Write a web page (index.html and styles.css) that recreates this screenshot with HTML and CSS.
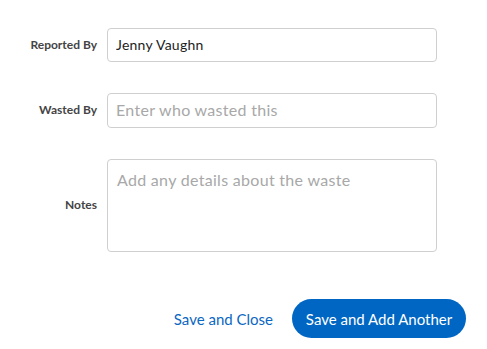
FILE: index.html
```html
<!DOCTYPE html>
<html>
<head>
<meta charset="utf-8">
<link rel="stylesheet" href="styles.css">
</head>
<body>
<form class="form">
  <div class="row">
    <label class="label">Reported By</label>
    <input class="field" type="text" value="Jenny Vaughn">
  </div>
  <div class="row">
    <label class="label">Wasted By</label>
    <input class="field field-tall" type="text" placeholder="Enter who wasted this">
  </div>
  <div class="row">
    <label class="label">Notes</label>
    <textarea class="field notes" placeholder="Add any details about the waste"></textarea>
  </div>
  <div class="actions">
    <button type="button" class="link-btn">Save and Close</button>
    <button type="button" class="primary-btn">Save and Add Another</button>
  </div>
</form>
</body>
</html>
```
FILE: styles.css
```css
html, body {
  margin: 0;
  padding: 0;
  background: #ffffff;
}
body {
  font-family: "Lato", "Open Sans", sans-serif;
  color: #333333;
}
.form {
  display: flex;
  flex-direction: column;
  padding: 28px 0 0 8px;
  width: 458px;
}
.row {
  display: grid;
  grid-template-columns: 89px 330px;
  column-gap: 10px;
  align-items: center;
  margin-bottom: 31px;
}
.label {
  text-align: right;
  font-size: 12px;
  font-weight: 700;
  color: #444444;
  position: relative;
  top: -1px;
}
.field {
  box-sizing: border-box;
  height: 34px;
  border: 1px solid #cfcfcf;
  border-radius: 4px;
  padding: 0 8px 2px;
  font-family: inherit;
  font-size: 14px;
  letter-spacing: 0.25px;
  color: #222222;
  outline: none;
  background: #fff;
}
.field-tall {
  height: 35px;
  font-size: 16px;
}
.field::placeholder {
  color: #a8a8a8;
  font-size: 16px;
  letter-spacing: 0.3px;
}
.notes {
  height: 93px;
  resize: none;
  padding: 10px 9px;
  font-size: 16px;
}
.actions {
  display: flex;
  justify-content: flex-end;
  align-items: center;
  gap: 19px;
  margin-top: 16px;
}
.link-btn {
  border: none;
  background: none;
  padding: 0;
  font-family: inherit;
  font-size: 15px;
  color: #0b67c2;
  cursor: pointer;
}
.primary-btn {
  height: 39px;
  width: 174px;
  border: none;
  border-radius: 20px;
  background: #0066c4;
  color: #ffffff;
  font-family: inherit;
  font-size: 15px;
  cursor: pointer;
}
```
